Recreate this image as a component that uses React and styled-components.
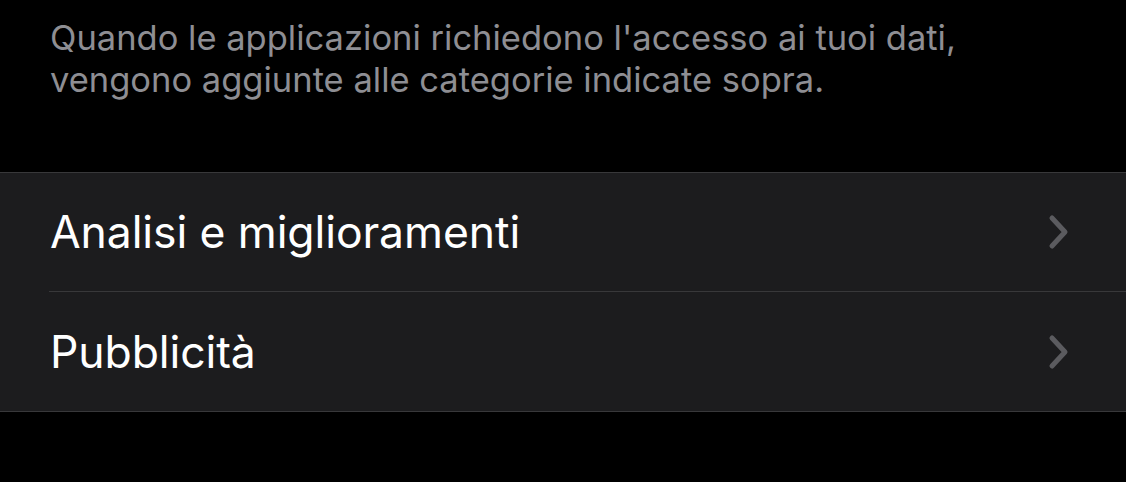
import React from "react";
import styled, { createGlobalStyle } from "styled-components";

const GlobalStyle = createGlobalStyle`
  html, body {
    margin: 0;
    padding: 0;
    background: #000;
  }
  body {
    font-family: Inter, "Noto Sans", sans-serif;
    -webkit-font-smoothing: antialiased;
  }
`;

const Page = styled.div`
  width: 1126px;
  height: 482px;
  background: #000;
  overflow: hidden;
`;

const Footer = styled.p`
  margin: 0;
  padding: 17px 50px 0 50px;
  color: #8e8e93;
  font-size: 34.5px;
  line-height: 42px;
  height: 172px;
  box-sizing: border-box;
`;

const Group = styled.div`
  background: #1c1c1e;
  border-top: 1px solid #38383a;
  border-bottom: 1px solid #38383a;
`;

const Row = styled.div`
  display: flex;
  align-items: center;
  padding-left: 49px;
  height: 119px;
`;

const RowInner = styled.div`
  flex: 1;
  height: 100%;
  display: flex;
  align-items: center;
  justify-content: space-between;
  padding-left: 1px;
  padding-right: 56px;
  border-bottom: ${(p) => (p.$last ? "none" : "1px solid #38383a")};
  box-sizing: border-box;
`;

const Label = styled.span`
  color: #fff;
  font-size: 44.5px;
  letter-spacing: -0.1px;
`;

const Chevron = () => (
  <svg width="22" height="36" viewBox="0 0 22 36" fill="none">
    <path
      d="M4 4 L17 18 L4 32"
      stroke="#5b5b5f"
      strokeWidth="5"
      strokeLinecap="round"
      strokeLinejoin="round"
    />
  </svg>
);

const items = ["Analisi e miglioramenti", "Pubblicità"];

const App = () => (
  <Page>
    <GlobalStyle />
    <Footer>
      Quando le applicazioni richiedono l'accesso ai tuoi dati,
      <br />
      vengono aggiunte alle categorie indicate sopra.
    </Footer>
    <Group>
      {items.map((label, i) => (
        <Row key={label}>
          <RowInner $last={i === items.length - 1}>
            <Label>{label}</Label>
            <Chevron />
          </RowInner>
        </Row>
      ))}
    </Group>
  </Page>
);

export default App;
